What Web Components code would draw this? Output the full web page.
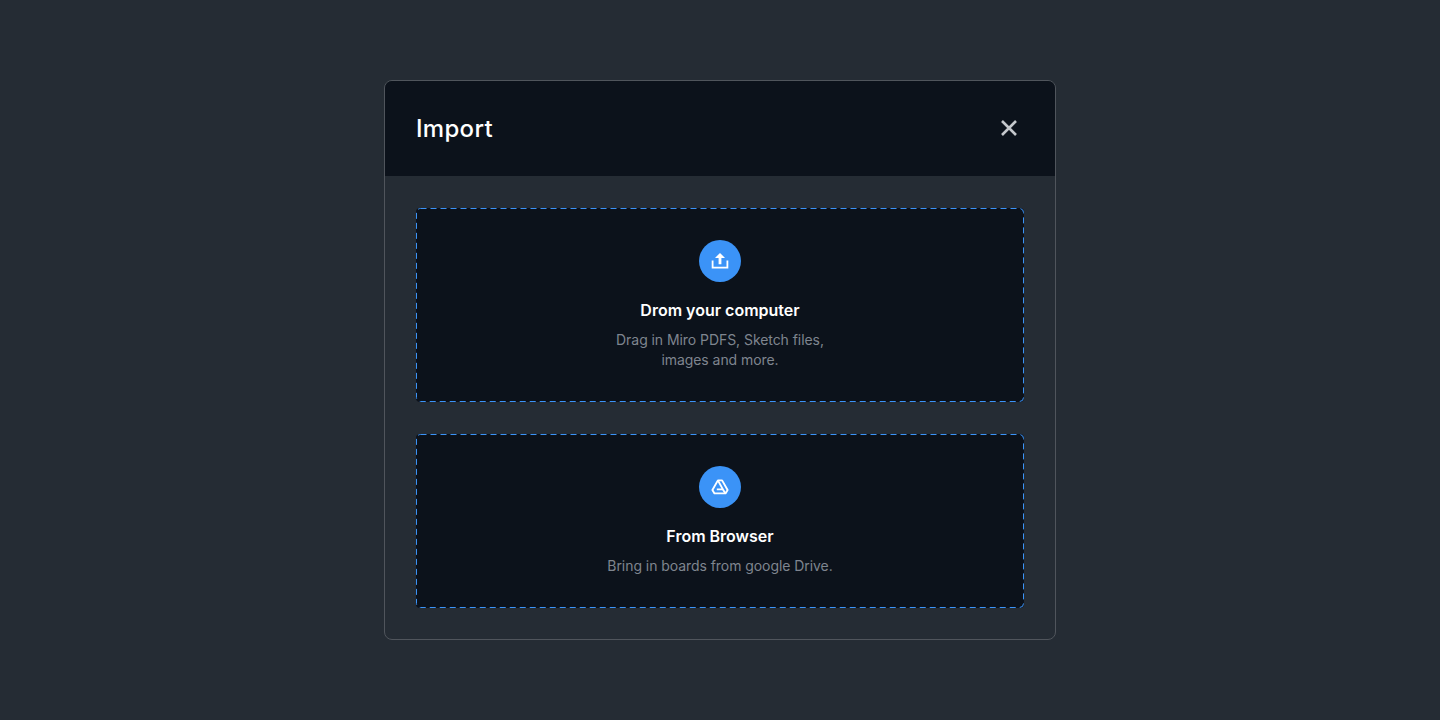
<!DOCTYPE html>
<html lang="en">
<head>
<meta charset="utf-8">
<title>Import</title>
<style>
  html, body { margin: 0; height: 100%; }
  body { background: #252c34; font-family: Inter, "Liberation Sans", sans-serif; }
</style>
</head>
<body>
<import-modal heading="Import">
  <drop-zone heading="Drom your computer">
    <svg slot="icon" width="20" height="20" viewBox="0 0 20 20" fill="none">
      <path d="M10 1.9 15 7H11.4V13.2H8.6V7H5Z" fill="#fff"/>
      <path d="M2.6 9.4V16.6H17.4V9.4" stroke="#fff" stroke-width="1.8"/>
    </svg>
    Drag in Miro PDFS, Sketch files,<br>images and more.
  </drop-zone>
  <drop-zone heading="From Browser">
    <svg slot="icon" width="20" height="20" viewBox="0 0 20 20" fill="none" stroke="#fff" stroke-width="1.9" stroke-linejoin="round">
      <path d="M7.9 3.4H12.1L17.6 13 15.5 16.4H4.5L2.4 13Z"/>
      <path d="M7.9 3.4 12.9 12.4H6.8M15.5 16.4 12.9 12.4"/>
    </svg>
    Bring in boards from google Drive.
  </drop-zone>
</import-modal>

<script>
  class ImportModal extends HTMLElement {
    constructor() {
      super();
      const root = this.attachShadow({ mode: 'open' });
      root.innerHTML = `
        <style>
          :host {
            display: flex;
            align-items: center;
            justify-content: center;
            height: 720px;
          }
          .dialog {
            box-sizing: border-box;
            width: 672px;
            height: 560px;
            display: flex;
            flex-direction: column;
            background: #252c34;
            border: 1px solid #50555c;
            border-radius: 8px;
            overflow: hidden;
          }
          header {
            height: 95px;
            flex: none;
            display: flex;
            align-items: center;
            justify-content: space-between;
            padding: 0 36px 0 31px;
            background: #0c121b;
          }
          h2 {
            margin: 0;
            font-size: 24px;
            line-height: 32px;
            font-weight: 500;
            letter-spacing: 0.3px;
            color: #fff;
          }
          svg { display: block; margin-bottom: 1px; }
          .body {
            display: flex;
            flex-direction: column;
            gap: 32px;
            padding: 32px 31px;
          }
        </style>
        <div class="dialog">
          <header>
            <h2></h2>
            <svg width="20" height="20" viewBox="0 0 20 20" fill="none" stroke="#c5c8cc" stroke-width="2.6">
              <path d="M3 3 17 17M17 3 3 17"/>
            </svg>
          </header>
          <div class="body"><slot></slot></div>
        </div>
      `;
      root.querySelector('h2').textContent = this.getAttribute('heading');
    }
  }

  class DropZone extends HTMLElement {
    constructor() {
      super();
      const root = this.attachShadow({ mode: 'open' });
      root.innerHTML = `
        <style>
          :host {
            box-sizing: border-box;
            position: relative;
            display: flex;
            flex-direction: column;
            align-items: center;
            padding: 32px 16px;
            background: #0c121b;
            border-radius: 4px;
            text-align: center;
            font-size: 14px;
            line-height: 20px;
            letter-spacing: -0.06px;
            color: #7f858f;
          }
          .dashes {
            position: absolute;
            inset: 0;
            width: 100%;
            height: 100%;
            pointer-events: none;
          }
          .dashes rect {
            x: 0.5px;
            y: 0.5px;
            width: calc(100% - 1px);
            height: calc(100% - 1px);
            rx: 4px;
            fill: none;
            stroke: #3b93f7;
            stroke-dasharray: 6 4;
          }
          .badge {
            width: 42px;
            height: 42px;
            display: flex;
            align-items: center;
            justify-content: center;
            border-radius: 50%;
            background: #3b93f7;
          }
          h3 {
            margin: 16px 0 8px;
            font-size: 16px;
            line-height: 24px;
            font-weight: 600;
            letter-spacing: 0;
            color: #fff;
          }
        </style>
        <svg class="dashes" aria-hidden="true"><rect></rect></svg>
        <div class="badge"><slot name="icon"></slot></div>
        <h3></h3>
        <div class="text"><slot></slot></div>
      `;
      root.querySelector('h3').textContent = this.getAttribute('heading');
    }
  }

  customElements.define('import-modal', ImportModal);
  customElements.define('drop-zone', DropZone);
</script>
</body>
</html>
